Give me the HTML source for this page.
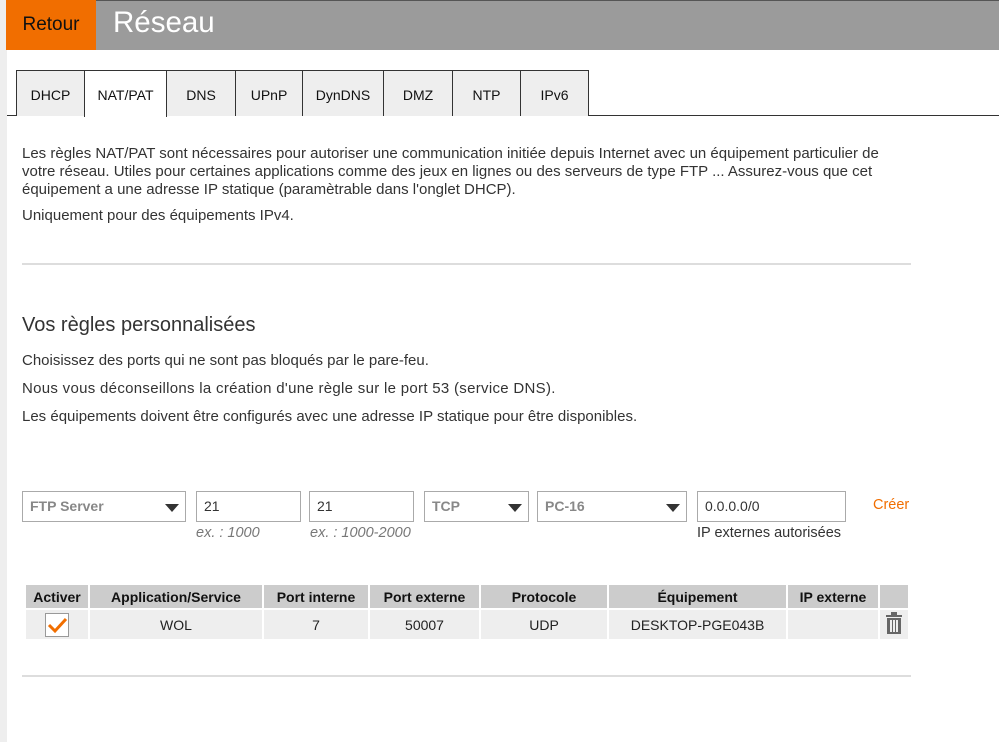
<!DOCTYPE html>
<html><head><meta charset="utf-8"><style>
*{margin:0;padding:0;box-sizing:border-box}
body{width:999px;height:742px;background:#fff;font-family:"Liberation Sans",Arial,sans-serif;color:#333;position:relative;overflow:hidden}
.abs{position:absolute}
.t{font-size:15px;color:#333;white-space:nowrap}
.tab{position:absolute;top:70px;height:46px;border:1px solid #333;border-bottom:none;background:#eee;font-size:14px;color:#111;text-align:center;line-height:48px}
.inp{position:absolute;top:491px;height:31px;border:1px solid #aaa;background:#fff;font-size:14px;color:#333;padding-left:7px;line-height:29px}
.sel{font-weight:bold;color:#888}
.arr{position:absolute;right:6px;top:12px;width:0;height:0;border-left:7px solid transparent;border-right:7px solid transparent;border-top:8px solid #333}
.hint{position:absolute;top:525px;font-size:14.5px;font-style:italic;color:#777}
table{position:absolute;left:24px;top:583px;border-collapse:collapse;font-size:14px}
td,th{border:2px solid #fff;text-align:center;padding:0}
th{background:#ccc;height:25px;color:#111}
td{background:#eee;height:31px;color:#222;font-weight:normal}
</style></head><body>
<div class="abs" style="left:0;top:0;width:7px;height:742px;background:#eee"></div>
<div class="abs" style="left:6px;top:0;width:993px;height:50px;background:#9b9b9b;border-top:1px solid #555"></div>
<div class="abs" style="left:6px;top:0;width:90px;height:50px;background:#f16e00;font-size:19px;color:#111;line-height:50px;text-align:center">Retour</div>
<div class="abs" style="left:113px;top:6px;font-size:29.5px;color:#fff">Réseau</div>
<div class="abs" style="left:7px;top:115px;width:992px;height:1px;background:#333"></div>
<div class="tab" style="left:16px;width:69px">DHCP</div>
<div class="tab" style="left:84px;width:83px;background:#fff;height:47px">NAT/PAT</div>
<div class="tab" style="left:166px;width:70px">DNS</div>
<div class="tab" style="left:235px;width:68px">UPnP</div>
<div class="tab" style="left:302px;width:82px">DynDNS</div>
<div class="tab" style="left:383px;width:70px">DMZ</div>
<div class="tab" style="left:452px;width:69px">NTP</div>
<div class="tab" style="left:520px;width:69px">IPv6</div>
<div class="abs t" style="left:22px;top:145px;line-height:18px">Les règles NAT/PAT sont nécessaires pour autoriser une communication initiée depuis Internet avec un équipement particulier de<br>votre réseau. Utiles pour certaines applications comme des jeux en lignes ou des serveurs de type FTP ... Assurez-vous que cet<br>équipement a une adresse IP statique (paramètrable dans l'onglet DHCP).</div>
<div class="abs t" style="left:22px;top:207px">Uniquement pour des équipements IPv4.</div>
<div class="abs" style="left:22px;top:263px;width:889px;height:2px;background:#ddd"></div>
<div class="abs" style="left:22px;top:314px;font-size:20px;color:#333">Vos règles personnalisées</div>
<div class="abs t" style="left:22px;top:352px">Choisissez des ports qui ne sont pas bloqués par le pare-feu.</div>
<div class="abs t" style="left:22px;top:380px;letter-spacing:0.3px">Nous vous déconseillons la création d'une règle sur le port 53 (service DNS).</div>
<div class="abs t" style="left:22px;top:408px">Les équipements doivent être configurés avec une adresse IP statique pour être disponibles.</div>
<div class="inp sel" style="left:22px;width:164px">FTP Server<span class="arr"></span></div>
<div class="inp" style="left:196px;width:105px">21</div>
<div class="inp" style="left:309px;width:105px">21</div>
<div class="inp sel" style="left:424px;width:105px">TCP<span class="arr"></span></div>
<div class="inp sel" style="left:537px;width:150px">PC-16<span class="arr"></span></div>
<div class="inp" style="left:697px;width:149px">0.0.0.0/0</div>
<div class="abs" style="left:873px;top:497px;font-size:14.5px;color:#f16e00">Créer</div>
<div class="hint" style="left:196px">ex. : 1000</div>
<div class="hint" style="left:310px">ex. : 1000-2000</div>
<div class="abs" style="left:697px;top:525px;font-size:14.5px;color:#333">IP externes autorisées</div>
<table><tr>
<th style="width:64px">Activer</th><th style="width:174px">Application/Service</th><th style="width:106px">Port interne</th><th style="width:111px">Port externe</th><th style="width:128px">Protocole</th><th style="width:179px">Équipement</th><th style="width:92px">IP externe</th><th style="width:30px"></th></tr>
<tr><td><div style="width:24px;height:24px;border:1px solid #999;background:#fff;margin:0 auto;position:relative"><svg width="24" height="24" style="position:absolute;left:0;top:0"><path d="M3 11 L9 17 L20 5" stroke="#f16e00" stroke-width="3" fill="none"/></svg></div></td><td>WOL</td><td>7</td><td>50007</td><td>UDP</td><td>DESKTOP-PGE043B</td><td></td>
<td><svg width="18" height="22" viewBox="0 0 18 22"><rect x="1" y="3" width="16" height="2" fill="#666"/><rect x="6" y="0" width="6" height="3" fill="#666"/><rect x="2" y="6" width="14" height="16" fill="#666"/><rect x="5" y="8" width="2" height="12" fill="#eee"/><rect x="8" y="8" width="2" height="12" fill="#eee"/><rect x="11" y="8" width="2" height="12" fill="#eee"/></svg></td></tr></table>
<div class="abs" style="left:22px;top:675px;width:889px;height:2px;background:#ddd"></div>
</body></html>
